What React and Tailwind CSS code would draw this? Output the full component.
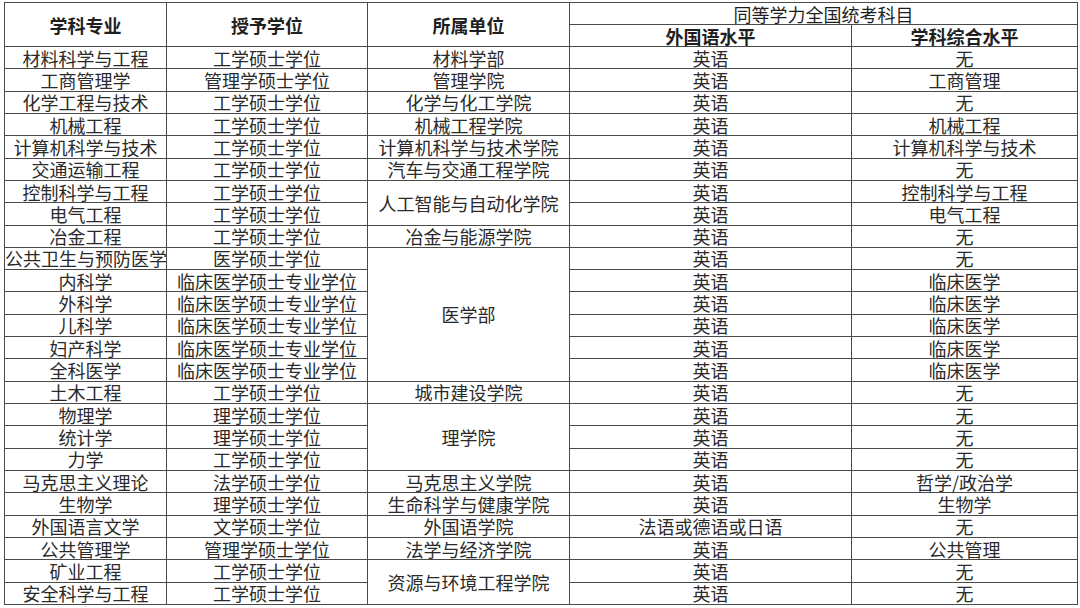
const rows = [
  ['材料科学与工程', '工学硕士学位', ['材料学部', 1], '英语', '无'],
  ['工商管理学', '管理学硕士学位', ['管理学院', 1], '英语', '工商管理'],
  ['化学工程与技术', '工学硕士学位', ['化学与化工学院', 1], '英语', '无'],
  ['机械工程', '工学硕士学位', ['机械工程学院', 1], '英语', '机械工程'],
  ['计算机科学与技术', '工学硕士学位', ['计算机科学与技术学院', 1], '英语', '计算机科学与技术'],
  ['交通运输工程', '工学硕士学位', ['汽车与交通工程学院', 1], '英语', '无'],
  ['控制科学与工程', '工学硕士学位', ['人工智能与自动化学院', 2], '英语', '控制科学与工程'],
  ['电气工程', '工学硕士学位', null, '英语', '电气工程'],
  ['冶金工程', '工学硕士学位', ['冶金与能源学院', 1], '英语', '无'],
  ['公共卫生与预防医学', '医学硕士学位', ['医学部', 6], '英语', '无'],
  ['内科学', '临床医学硕士专业学位', null, '英语', '临床医学'],
  ['外科学', '临床医学硕士专业学位', null, '英语', '临床医学'],
  ['儿科学', '临床医学硕士专业学位', null, '英语', '临床医学'],
  ['妇产科学', '临床医学硕士专业学位', null, '英语', '临床医学'],
  ['全科医学', '临床医学硕士专业学位', null, '英语', '临床医学'],
  ['土木工程', '工学硕士学位', ['城市建设学院', 1], '英语', '无'],
  ['物理学', '理学硕士学位', ['理学院', 3], '英语', '无'],
  ['统计学', '理学硕士学位', null, '英语', '无'],
  ['力学', '工学硕士学位', null, '英语', '无'],
  ['马克思主义理论', '法学硕士学位', ['马克思主义学院', 1], '英语', '哲学/政治学'],
  ['生物学', '理学硕士学位', ['生命科学与健康学院', 1], '英语', '生物学'],
  ['外国语言文学', '文学硕士学位', ['外国语学院', 1], '法语或德语或日语', '无'],
  ['公共管理学', '管理学硕士学位', ['法学与经济学院', 1], '英语', '公共管理'],
  ['矿业工程', '工学硕士学位', ['资源与环境工程学院', 2], '英语', '无'],
  ['安全科学与工程', '工学硕士学位', null, '英语', '无'],
]

const cell = 'border border-[#4a4a4a] p-0 text-center align-middle whitespace-nowrap'

export default function App() {
  return (
    <div className="min-h-[608px] w-[1080px] bg-white pl-[4px] pt-[2px] font-['Noto_Sans_CJK_SC',sans-serif] text-[18px] leading-[18px] text-[#2a2a2a]">
      <table className="w-[1073px] table-fixed border-collapse">
        <colgroup>
          <col className="w-[162px]" />
          <col className="w-[201px]" />
          <col className="w-[202px]" />
          <col className="w-[282px]" />
          <col className="w-[226px]" />
        </colgroup>
        <thead className="font-bold text-[#1f1f1f]">
          <tr className="h-[22px]">
            <th rowSpan={2} className={cell}>学科专业</th>
            <th rowSpan={2} className={cell}>授予学位</th>
            <th rowSpan={2} className={cell}>所属单位</th>
            <th colSpan={2} className={`${cell} font-normal`}>同等学力全国统考科目</th>
          </tr>
          <tr className="h-[22px]">
            <th className={cell}>外国语水平</th>
            <th className={cell}>学科综合水平</th>
          </tr>
        </thead>
        <tbody>
          {rows.map((row, i) => (
            <tr key={i} className="h-[22.32px]">
              <td className={cell}>{row[0]}</td>
              <td className={cell}>{row[1]}</td>
              {row[2] && (
                <td rowSpan={row[2][1]} className={cell}>{row[2][0]}</td>
              )}
              <td className={cell}>{row[3]}</td>
              <td className={cell}>{row[4]}</td>
            </tr>
          ))}
        </tbody>
      </table>
    </div>
  )
}
